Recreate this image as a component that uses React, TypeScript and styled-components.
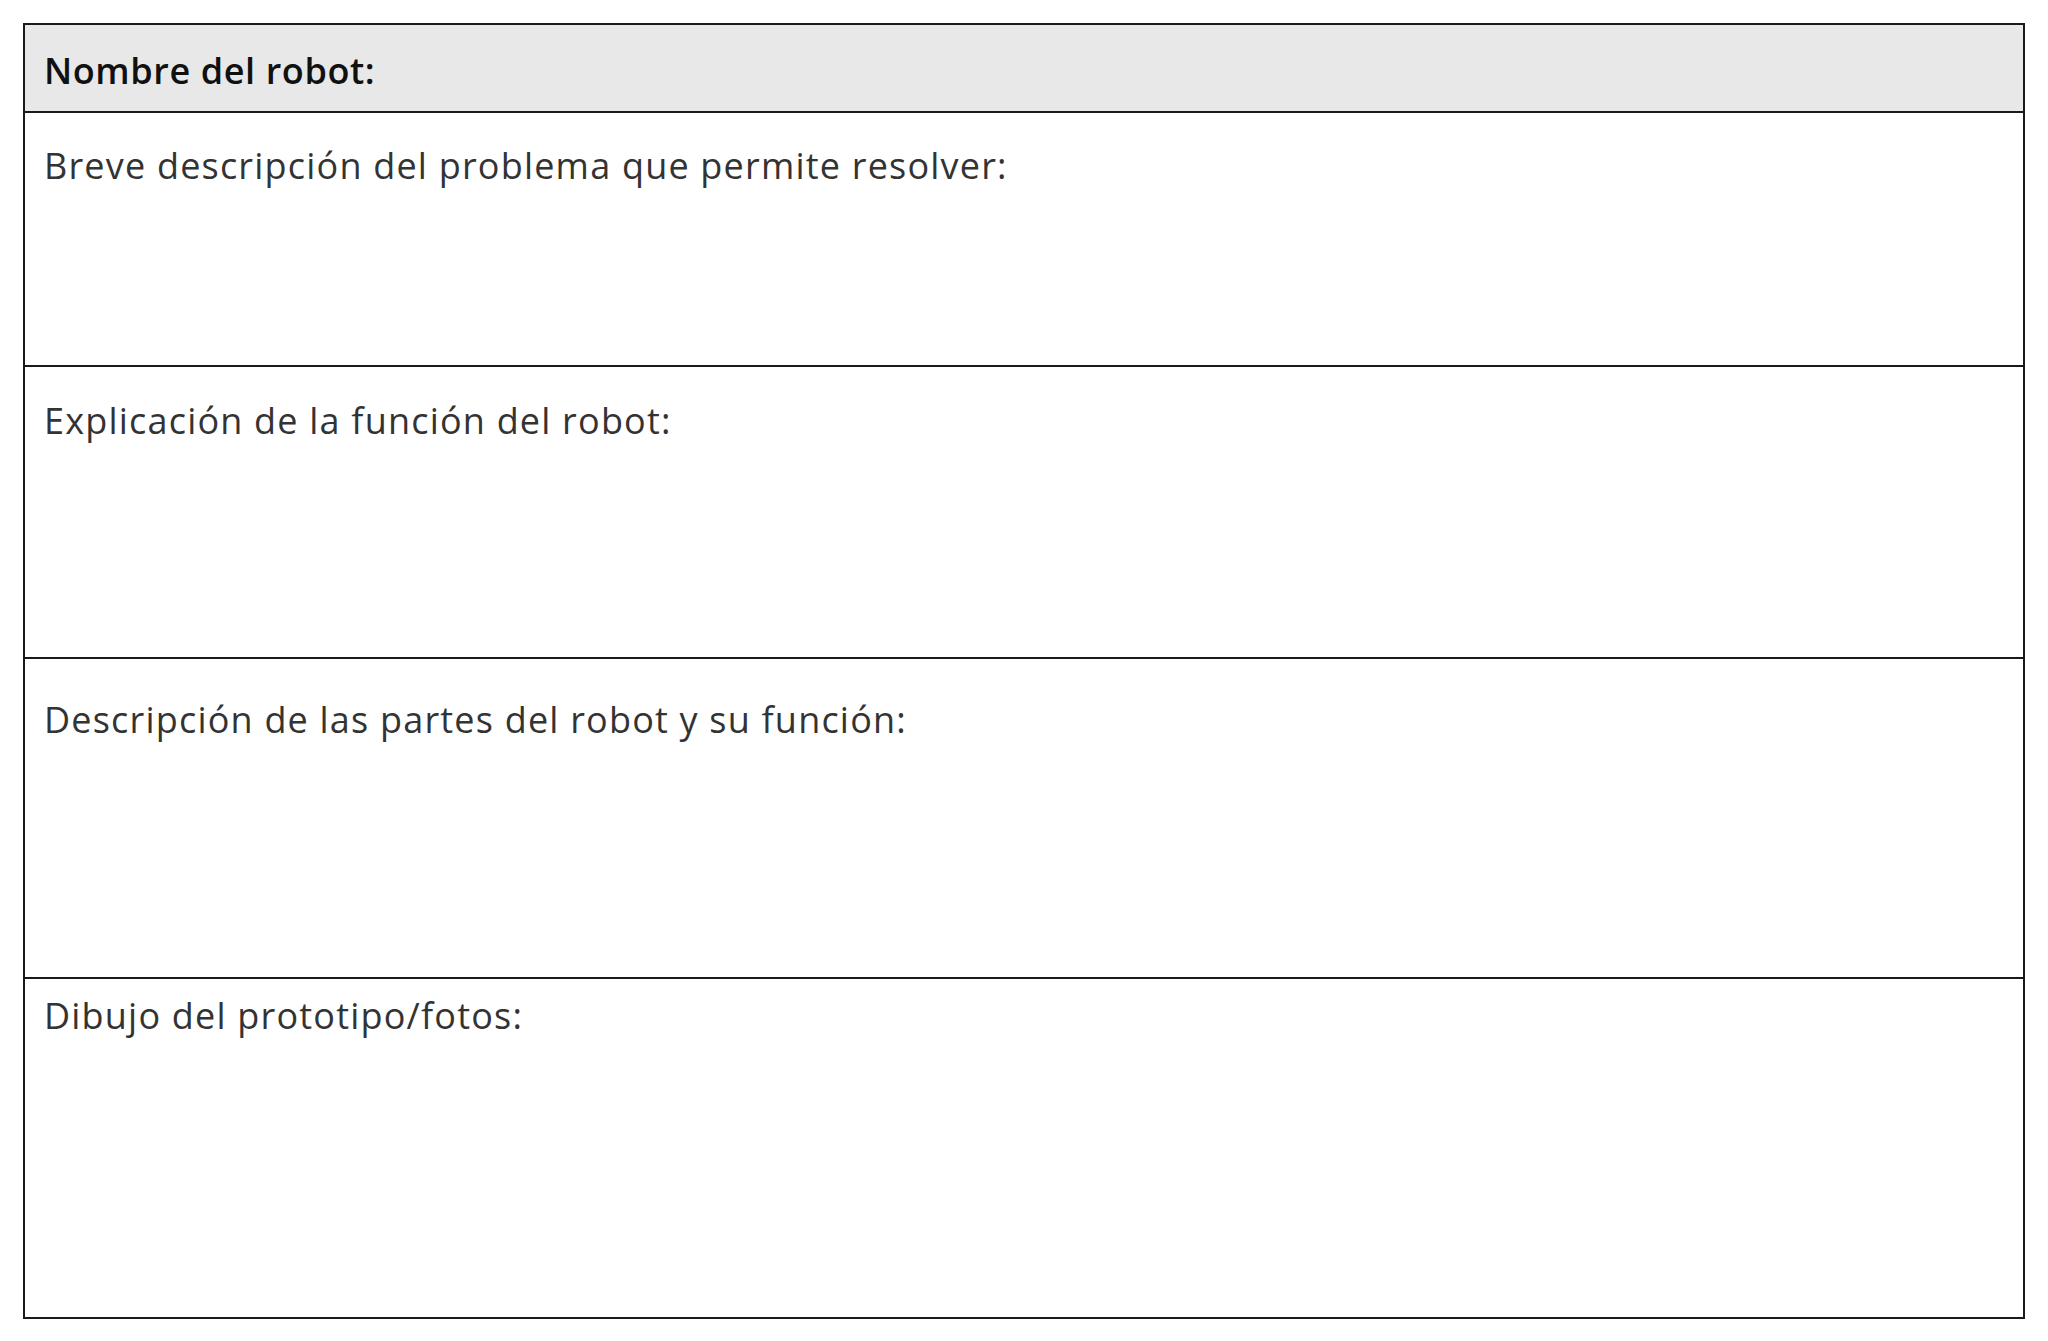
import React from "react";
import styled, { createGlobalStyle } from "styled-components";

const GlobalStyle = createGlobalStyle`
  html, body {
    margin: 0;
    padding: 0;
    background: #ffffff;
  }
  body {
    font-family: "Open Sans", Lato, "Liberation Sans", sans-serif;
  }
`;

const Page = styled.div`
  padding: 23px 23px;
  width: 2048px;
  box-sizing: border-box;
`;

const Sheet = styled.div`
  width: 2002px;
  box-sizing: border-box;
  border: 2px solid #1a1a1a;
  display: flex;
  flex-direction: column;
`;

const HeaderRow = styled.div`
  height: 88px;
  box-sizing: border-box;
  background: #e8e8e8;
  border-bottom: 2px solid #1a1a1a;
  padding: 25px 0 0 19px;
`;

const HeaderLabel = styled.span`
  font-size: 36px;
  line-height: 42px;
  font-weight: 600;
  letter-spacing: 0.6px;
  color: #111111;
`;

const FieldRow = styled.div<{ $height: number; $padTop: number; $last?: boolean }>`
  height: ${(p) => p.$height}px;
  box-sizing: border-box;
  padding: ${(p) => p.$padTop}px 0 0 19px;
  border-bottom: ${(p) => (p.$last ? "none" : "2px solid #1a1a1a")};
`;

const FieldLabel = styled.span`
  font-size: 36px;
  line-height: 42px;
  font-weight: 400;
  letter-spacing: 1.2px;
  color: #333333;
`;

const fields = [
  { label: "Breve descripción del problema que permite resolver:", height: 254, padTop: 32 },
  { label: "Explicación de la función del robot:", height: 292, padTop: 33 },
  { label: "Descripción de las partes del robot y su función:", height: 320, padTop: 40 },
  { label: "Dibujo del prototipo/fotos:", height: 338, padTop: 16 },
];

export default function App() {
  return (
    <>
      <GlobalStyle />
      <Page>
        <Sheet>
          <HeaderRow>
            <HeaderLabel>Nombre del robot:</HeaderLabel>
          </HeaderRow>
          {fields.map((f, i) => (
            <FieldRow
              key={f.label}
              $height={f.height}
              $padTop={f.padTop}
              $last={i === fields.length - 1}
            >
              <FieldLabel>{f.label}</FieldLabel>
            </FieldRow>
          ))}
        </Sheet>
      </Page>
    </>
  );
}
